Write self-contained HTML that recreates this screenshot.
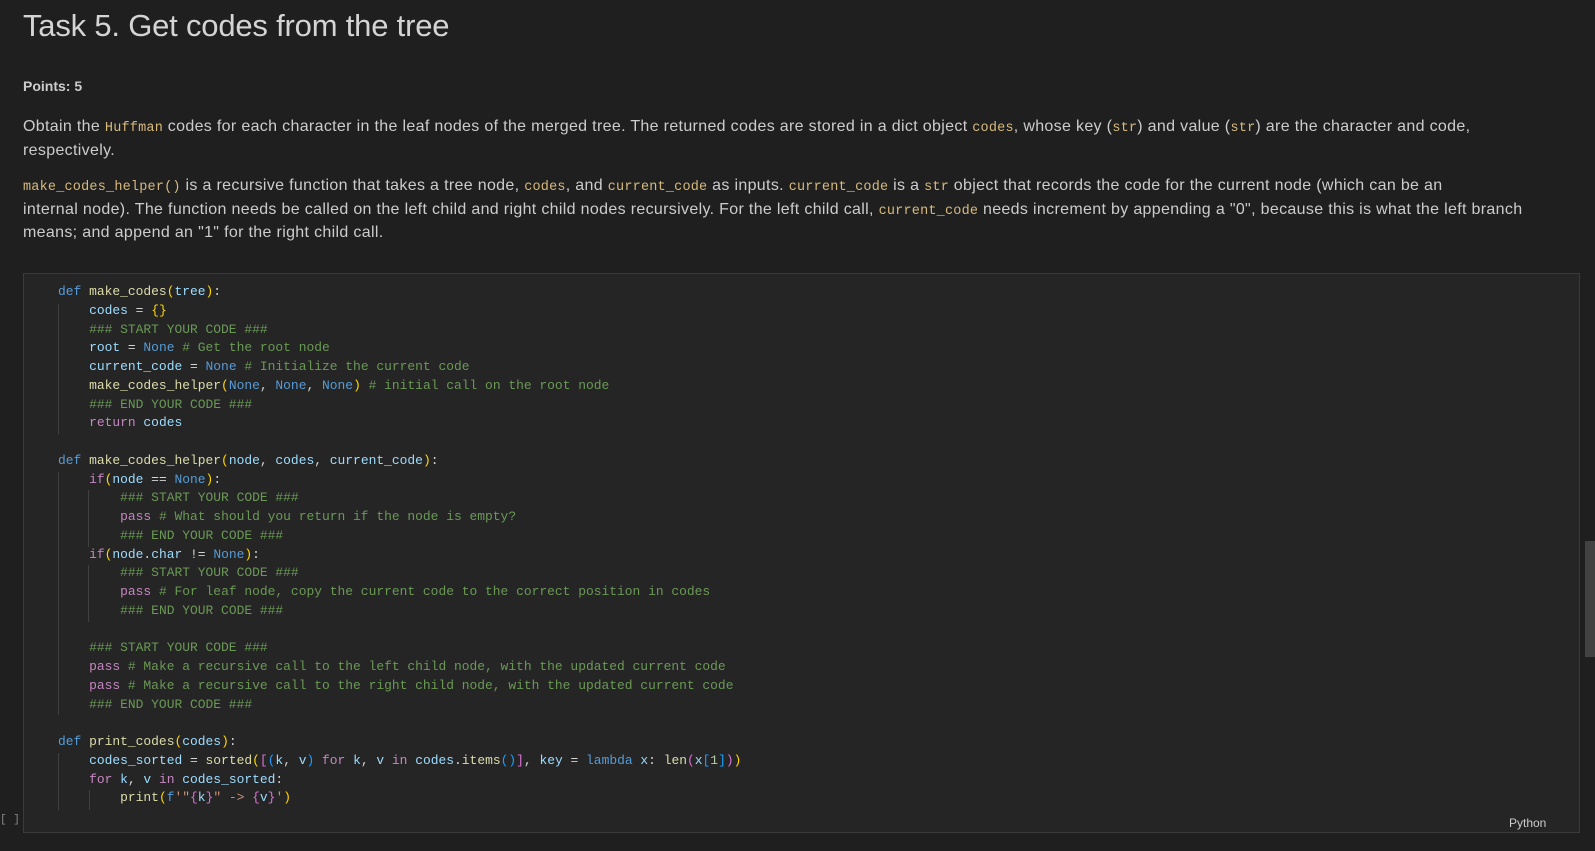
<!DOCTYPE html>
<html><head><meta charset="utf-8"><style>
body{margin:0;background:#1f1f1f;width:1595px;height:851px;overflow:hidden;font-family:"Liberation Sans",sans-serif;color:#cccccc;position:relative}
.t{position:absolute;left:23px;top:8px;font-size:31px;color:#d4d4d4;white-space:nowrap;letter-spacing:-0.2px}
.p{position:absolute;left:23px;font-size:16px;white-space:nowrap;line-height:21.5px;letter-spacing:0.33px}
.c{font-family:"Liberation Mono",monospace;color:#d7ba7d;font-size:13.5px;letter-spacing:0.2px}
.cell{position:absolute;left:23px;top:273px;width:1555px;height:558px;background:#252526;border:1px solid #3a3a3a}
pre{position:absolute;left:58px;top:283px;margin:0;font-family:"Liberation Mono",monospace;font-size:12.95px;line-height:18.75px;color:#d4d4d4}
.k{color:#569cd6}.v{color:#9cdcfe}.f{color:#dcdcaa}.m{color:#6a9955}.b{color:#ffd700}.r{color:#c586c0}.s{color:#ce9178}.n{color:#b5cea8}.p2{color:#da70d6}.b3{color:#179fff}
.g{position:absolute;width:1px;background:#404040}
.sb{position:absolute;left:1585px;top:541px;width:10px;height:116px;background:#424242}
</style></head><body>
<div class="t">Task 5. Get codes from the tree</div>
<div class="p" style="top:76px;font-weight:bold;font-size:14px;letter-spacing:0">Points: 5</div>
<div class="p" style="top:116px">Obtain the <span class="c">Huffman</span> codes for each character in the leaf nodes of the merged tree. The returned codes are stored in a dict object <span class="c">codes</span>, whose key (<span class="c">str</span>) and value (<span class="c">str</span>) are the character and code,<br>respectively.</div>
<div class="p" style="top:175px"><span class="c">make_codes_helper()</span> is a recursive function that takes a tree node, <span class="c">codes</span>, and <span class="c">current_code</span> as inputs. <span class="c">current_code</span> is a <span class="c">str</span> object that records the code for the current node (which can be an<br>internal node). The function needs be called on the left child and right child nodes recursively. For the left child call, <span class="c">current_code</span> needs increment by appending a "0", because this is what the left branch<br>means; and append an "1" for the right child call.</div>
<div class="cell"></div>
<div class="g" style="left:58px;top:304px;height:130px"></div>
<div class="g" style="left:58px;top:472px;height:243px"></div>
<div class="g" style="left:88px;top:490px;height:57px"></div>
<div class="g" style="left:88px;top:565px;height:57px"></div>
<div class="g" style="left:58px;top:753px;height:57px"></div>
<div class="g" style="left:89px;top:790px;height:20px"></div>
<pre><span class="k">def</span> <span class="f">make_codes</span><span class="b">(</span><span class="v">tree</span><span class="b">)</span>:
    <span class="v">codes</span> = <span class="b">{}</span>
    <span class="m">### START YOUR CODE ###</span>
    <span class="v">root</span> = <span class="k">None</span> <span class="m"># Get the root node</span>
    <span class="v">current_code</span> = <span class="k">None</span> <span class="m"># Initialize the current code</span>
    <span class="f">make_codes_helper</span><span class="b">(</span><span class="k">None</span>, <span class="k">None</span>, <span class="k">None</span><span class="b">)</span> <span class="m"># initial call on the root node</span>
    <span class="m">### END YOUR CODE ###</span>
    <span class="r">return</span> <span class="v">codes</span>

<span class="k">def</span> <span class="f">make_codes_helper</span><span class="b">(</span><span class="v">node</span>, <span class="v">codes</span>, <span class="v">current_code</span><span class="b">)</span>:
    <span class="r">if</span><span class="b">(</span><span class="v">node</span> == <span class="k">None</span><span class="b">)</span>:
        <span class="m">### START YOUR CODE ###</span>
        <span class="r">pass</span> <span class="m"># What should you return if the node is empty?</span>
        <span class="m">### END YOUR CODE ###</span>
    <span class="r">if</span><span class="b">(</span><span class="v">node</span>.<span class="v">char</span> != <span class="k">None</span><span class="b">)</span>:
        <span class="m">### START YOUR CODE ###</span>
        <span class="r">pass</span> <span class="m"># For leaf node, copy the current code to the correct position in codes</span>
        <span class="m">### END YOUR CODE ###</span>

    <span class="m">### START YOUR CODE ###</span>
    <span class="r">pass</span> <span class="m"># Make a recursive call to the left child node, with the updated current code</span>
    <span class="r">pass</span> <span class="m"># Make a recursive call to the right child node, with the updated current code</span>
    <span class="m">### END YOUR CODE ###</span>

<span class="k">def</span> <span class="f">print_codes</span><span class="b">(</span><span class="v">codes</span><span class="b">)</span>:
    <span class="v">codes_sorted</span> = <span class="f">sorted</span><span class="b">(</span><span class="p2">[</span><span class="b3">(</span><span class="v">k</span>, <span class="v">v</span><span class="b3">)</span> <span class="r">for</span> <span class="v">k</span>, <span class="v">v</span> <span class="r">in</span> <span class="v">codes</span>.<span class="f">items</span><span class="b3">()</span><span class="p2">]</span>, <span class="v">key</span> = <span class="k">lambda</span> <span class="v">x</span>: <span class="f">len</span><span class="p2">(</span><span class="v">x</span><span class="b3">[</span><span class="n">1</span><span class="b3">]</span><span class="p2">)</span><span class="b">)</span>
    <span class="r">for</span> <span class="v">k</span>, <span class="v">v</span> <span class="r">in</span> <span class="v">codes_sorted</span>:
        <span class="f">print</span><span class="b">(</span><span class="k">f</span><span class="s">'"</span><span class="p2">{</span><span class="v">k</span><span class="p2">}</span><span class="s">" -&gt; </span><span class="p2">{</span><span class="v">v</span><span class="p2">}</span><span class="s">'</span><span class="b">)</span></pre>
<div style="position:absolute;left:0;top:814px;font-family:'Liberation Mono',monospace;font-size:11px;color:#8a8a8a">[ ]</div>
<div style="position:absolute;left:1509px;top:816px;font-size:12px;color:#cccccc">Python</div>
<div class="sb"></div>
</body></html>
